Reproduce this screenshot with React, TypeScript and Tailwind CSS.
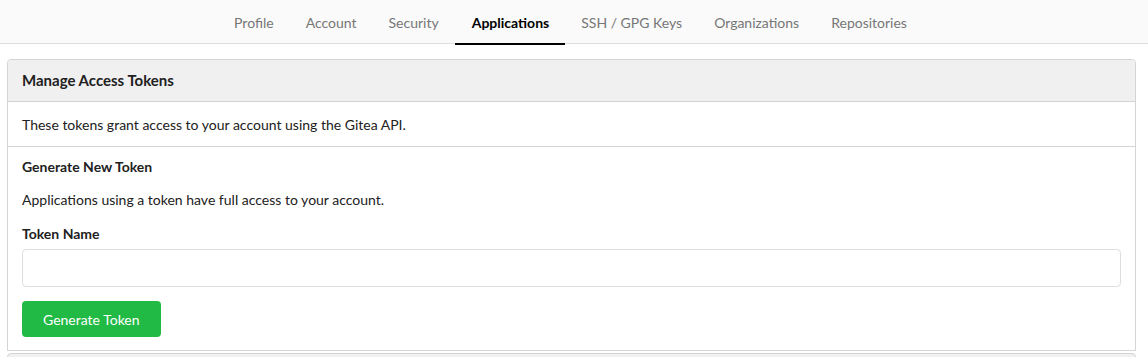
import React from "react";

const tabs = ["Profile", "Account", "Security", "Applications", "SSH / GPG Keys", "Organizations", "Repositories"];

const App: React.FC = () => {
    const active = "Applications";

    return (
        <div className="min-h-[357px] bg-white text-[14px] text-[#212121] font-['Lato','Liberation_Sans',sans-serif]">
            <nav className="flex justify-center h-[44px] pr-[7px] bg-[#fafafa] border-b border-[#dedede]">
                {tabs.map((tab) => (
                    <a
                        key={tab}
                        className={
                            tab === active
                                ? "flex items-center h-[45px] -mb-[2px] pt-[2px] pl-[17px] pr-[16px] border-b-2 border-black font-bold text-black"
                                : "flex items-center h-[45px] -mb-[2px] pt-[2px] px-[16px] border-b-2 border-transparent text-[#767676]"
                        }
                    >
                        {tab}
                    </a>
                ))}
            </nav>

            <div className="ml-[7px] w-[1129px] mt-[15px]">
                <div className="border border-[#d4d4d5] rounded-t-[4px]">
                    <div className="h-[42px] flex items-center px-[14px] bg-[#f0f0f0] border-b border-[#d4d4d5] rounded-t-[4px] text-[15px] font-bold">
                        Manage Access Tokens
                    </div>
                    <div className="h-[45px] flex items-center px-[14px] border-b border-[#d4d4d5]">
                        These tokens grant access to your account using the Gitea API.
                    </div>
                    <div className="px-[14px] pt-[10px] pb-[13px]">
                        <h4 className="leading-[20px] font-bold">Generate New Token</h4>
                        <p className="mt-[13px] leading-[20px]">Applications using a token have full access to your account.</p>
                        <label className="block mt-[14px] leading-[20px] font-bold">Token Name</label>
                        <input
                            className="block mt-[5px] w-full h-[38px] rounded-[4px] border border-[#dedede] bg-white px-[14px] outline-none"
                            type="text"
                        />
                        <button className="mt-[14px] h-[36px] px-[21px] rounded-[4px] bg-[#21ba45] text-white">
                            Generate Token
                        </button>
                    </div>
                </div>
                <div className="mt-[2px] h-[20px] border border-[#d4d4d5] rounded-t-[4px] bg-[#f0f0f0]" />
            </div>
        </div>
    );
};

export default App;
